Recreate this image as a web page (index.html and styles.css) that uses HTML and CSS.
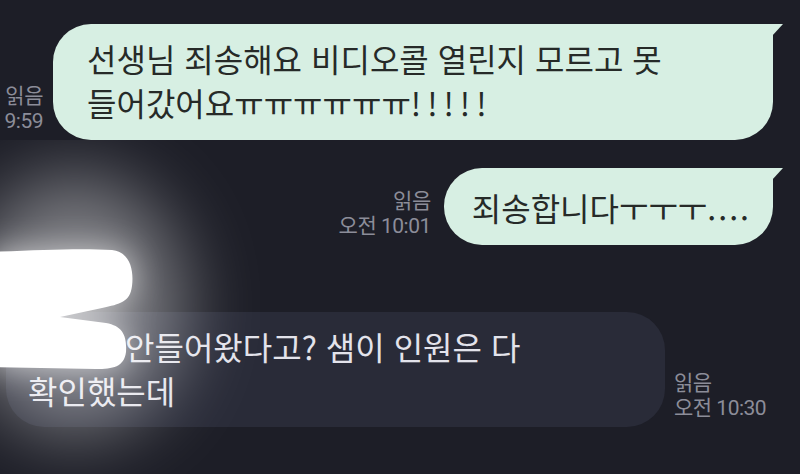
FILE: index.html
```html
<!DOCTYPE html>
<html lang="ko">
<head>
<meta charset="utf-8">
<title>Chat</title>
<link rel="stylesheet" href="styles.css">
</head>
<body>
<main class="chat">
  <div class="row row-sent">
    <div class="meta meta-sent"><span>읽음</span><span>오전 9:59</span></div>
    <div class="bubble bubble-sent bubble-wide">선생님 죄송해요 비디오콜 열린지 모르고 못<br>들어갔어요ㅠㅠㅠㅠㅠㅠ<span class="punct">!!!!!</span></div>
  </div>
  <div class="row row-sent row-second">
    <div class="meta meta-sent meta-near"><span>읽음</span><span>오전 10:01</span></div>
    <div class="bubble bubble-sent bubble-short">죄송합니다ㅜㅜㅜ<span class="dots">....</span></div>
  </div>
  <div class="row row-received">
    <div class="bubble bubble-received"><span class="redacted"></span>안들어왔다고? 샘이 인원은 다<br>확인했는데</div>
    <div class="meta meta-received"><span>읽음</span><span>오전 10:30</span></div>
  </div>
</main>
<div class="scribble" aria-hidden="true">
  <svg width="320" height="334" viewBox="0 0 320 334">
    <defs>
      <filter id="glowWide" x="-100%" y="-100%" width="300%" height="300%">
        <feGaussianBlur stdDeviation="38"/>
      </filter>
      <filter id="glowNear" x="-100%" y="-100%" width="300%" height="300%">
        <feGaussianBlur stdDeviation="16"/>
      </filter>
    </defs>
    <ellipse cx="75" cy="165" rx="110" ry="130" fill="#ffffff" opacity="0.42" filter="url(#glowWide)"/>
    <path d="M-10,112 C40,110 80,108 112,110 C130,112 134,130 132,146 C130,162 120,164 102,168 L60,177 L106,183 C123,186 127,196 126,212 C124,227 113,229 96,229 L-10,227 Z" fill="#ffffff" opacity="0.6" filter="url(#glowNear)"/>
    <path d="M-10,112 C40,110 80,108 112,110 C130,112 134,130 132,146 C130,162 120,164 102,168 L60,177 L106,183 C123,186 127,196 126,212 C124,227 113,229 96,229 L-10,227 Z" fill="#ffffff"/>
  </svg>
</div>
</body>
</html>
```

FILE: styles.css
```css
html, body {
  margin: 0;
  padding: 0;
}

body {
  width: 800px;
  height: 474px;
  overflow: hidden;
  position: relative;
  background: #1d1e27;
  font-family: "Noto Sans CJK KR", "Noto Sans", sans-serif;
}

.chat {
  display: flex;
  flex-direction: column;
  padding: 24px 27px 0 6px;
}

.row {
  display: flex;
  align-items: flex-end;
}

.row-sent {
  justify-content: flex-end;
}

.row-second {
  margin-top: 28px;
}

.row-received {
  margin-top: 67px;
  justify-content: flex-start;
}

.meta {
  flex-shrink: 0;
  display: flex;
  flex-direction: column;
  font-family: "Roboto", "Noto Sans CJK KR", sans-serif;
  font-size: 21px;
  line-height: 25px;
  color: #8c8d99;
  white-space: nowrap;
  letter-spacing: -0.5px;
  margin-bottom: 6px;
}

.meta-sent {
  align-items: flex-end;
  margin-right: 10px;
}

.meta-near {
  margin-right: 13px;
}

.meta-received {
  align-items: flex-start;
  margin-left: 9px;
}

.bubble {
  flex-shrink: 0;
  position: relative;
  box-sizing: border-box;
  font-size: 32px;
  font-weight: 400;
  line-height: 44px;
  border-radius: 38px;
  padding: 12px 24px 16px 34px;
}

.bubble-sent {
  background: #d7efe3;
  color: #262a28;
  border-top-right-radius: 0;
}

.bubble-sent::after {
  content: "";
  position: absolute;
  top: 0;
  right: -10px;
  width: 11px;
  height: 12px;
  background: #d7efe3;
  clip-path: polygon(0 0, 100% 0, 0 100%);
}

.bubble-wide {
  width: 720px;
}

.bubble-short {
  padding: 17px 22px 16px 28px;
}

.bubble-received {
  width: 659px;
  background: #292b38;
  color: #e3e3eb;
  border-top-left-radius: 0;
  padding: 12px 24px 15px 22px;
}

.punct {
  letter-spacing: 6px;
}

.dots {
  letter-spacing: 2px;
}

.redacted {
  display: inline-block;
  width: 97px;
}

.scribble {
  position: absolute;
  left: 0;
  top: 140px;
  width: 320px;
  height: 334px;
  pointer-events: none;
}

.scribble svg {
  display: block;
}
```
